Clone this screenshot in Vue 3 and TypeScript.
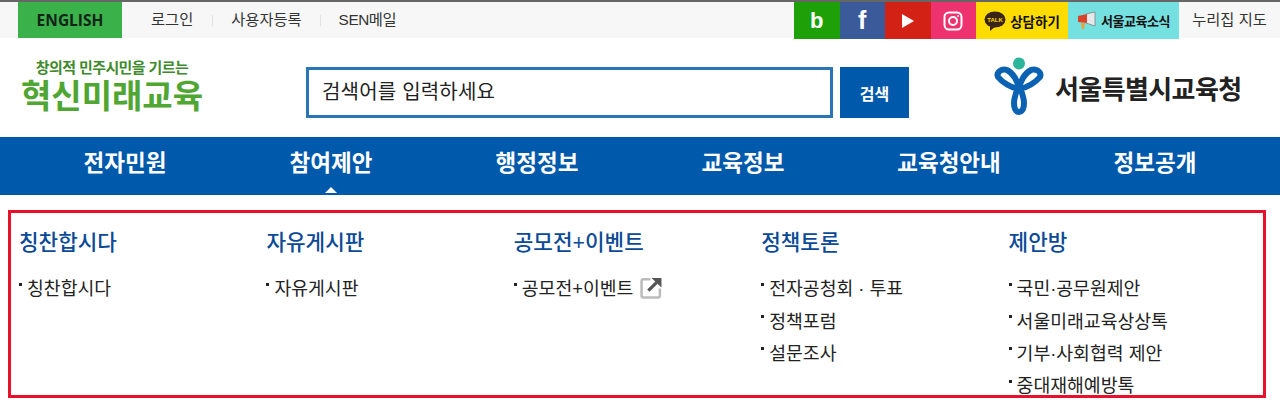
<script setup lang="ts">
const topLinks = ['로그인', '사용자등록', 'SEN메일']
const navItems = ['전자민원', '참여제안', '행정정보', '교육정보', '교육청안내', '정보공개']
const columns = [
  { title: '칭찬합시다', links: [{ label: '칭찬합시다' }] },
  { title: '자유게시판', links: [{ label: '자유게시판' }] },
  { title: '공모전+이벤트', links: [{ label: '공모전+이벤트', external: true }] },
  { title: '정책토론', links: [{ label: '전자공청회 · 투표' }, { label: '정책포럼' }, { label: '설문조사' }] },
  {
    title: '제안방',
    links: [{ label: '국민·공무원제안' }, { label: '서울미래교육상상톡' }, { label: '기부·사회협력 제안' }, { label: '중대재해예방톡' }],
  },
]
</script>

<template>
  <div class="page">
    <div class="topbar">
      <a class="english">ENGLISH</a>
      <ul class="toplinks">
        <li v-for="link in topLinks" :key="link">{{ link }}</li>
      </ul>
      <div class="sns">
        <a class="sq blog">b</a>
        <a class="sq fb">f</a>
        <a class="sq yt">
          <svg width="14" height="14" viewBox="0 0 14 14"><path d="M1 0 L13 7 L1 14 Z" fill="#fff" /></svg>
        </a>
        <a class="sq insta">
          <svg width="20" height="20" viewBox="0 0 20 20" fill="none" stroke="#fff" stroke-width="2">
            <rect x="1.5" y="1.5" width="17" height="17" rx="4.5" />
            <circle cx="10" cy="10" r="4" />
            <circle cx="15" cy="5" r="0.6" fill="#fff" stroke-width="1" />
          </svg>
        </a>
        <a class="talk">
          <svg width="22" height="22" viewBox="0 0 22 22">
            <ellipse cx="11" cy="9.5" rx="10.5" ry="8" fill="#3a2415" />
            <path d="M6 15 L6 21 L12 16 Z" fill="#3a2415" />
            <text x="11" y="12" text-anchor="middle" class="talk-txt">TALK</text>
          </svg>
          <span>상담하기</span>
        </a>
        <a class="news">
          <svg width="20" height="20" viewBox="0 0 20 20">
            <path d="M9 3 L18 1 L18 15 L9 12 Z" fill="#e8e8e8" stroke="#777" stroke-width="0.7" />
            <path d="M1 5 L10 3 L10 12 L1 11 Z" fill="#d9432b" />
            <path d="M4 12 L8 12 L7 18 L5 18 Z" fill="#e8a13a" />
          </svg>
          <span>서울교육소식</span>
        </a>
      </div>
      <a class="nuri">누리집 지도</a>
    </div>

    <header class="header">
      <div class="slogan">
        <span class="slogan-sub">창의적 민주시민을 기르는</span>
        <span class="slogan-main">혁신미래교육</span>
      </div>
      <form class="search" @submit.prevent>
        <div class="search-input">검색어를 입력하세요</div>
        <button class="search-btn" type="button">검색</button>
      </form>
      <div class="office">
        <svg width="50" height="58" viewBox="0 0 50 58">
          <circle cx="25" cy="6.5" r="6" fill="#2cb59a" />
          <g fill="none" stroke="#0b62b3" stroke-width="6" stroke-linejoin="round">
            <path d="M25 32 C17 31 8 25 4 20 C2 15 8 11 13 13 C19 16 24 24 25 32 Z" />
            <path d="M25 32 C33 31 42 25 46 20 C48 15 42 11 37 13 C31 16 26 24 25 32 Z" />
            <path d="M25 30 C20 38 19 47 21 52 C23 56 27 56 29 52 C31 47 30 38 25 30 Z" />
          </g>
        </svg>
        <span>서울특별시교육청</span>
      </div>
    </header>

    <nav class="nav">
      <a v-for="(item, i) in navItems" :key="item" class="nav-item" :class="{ on: i === 1 }">{{ item }}</a>
    </nav>

    <section class="panel">
      <div v-for="col in columns" :key="col.title" class="col">
        <h3>{{ col.title }}</h3>
        <ul>
          <li v-for="link in col.links" :key="link.label">
            {{ link.label }}
            <svg v-if="link.external" class="ext" width="23" height="23" viewBox="0 0 22 22" fill="none">
              <path d="M10 3 H3 A1.5 1.5 0 0 0 1.5 4.5 V19 A1.5 1.5 0 0 0 3 20.5 H17.5 A1.5 1.5 0 0 0 19 19 V12" stroke="#bbb" stroke-width="2.4" />
              <path d="M8 14 L16 6" stroke="#555" stroke-width="3" />
              <path d="M11 2 H20.5 V11 Z" fill="#555" />
            </svg>
          </li>
        </ul>
      </div>
    </section>
  </div>
</template>

<style>
html,
body {
  margin: 0;
  background: #fff;
  overflow: hidden;
}
</style>

<style scoped>
.page {
  width: 1280px;
  height: 412px;
  overflow: hidden;
  font-family: "Liberation Sans", "Noto Sans CJK KR", sans-serif;
  color: #222;
}
ul {
  list-style: none;
  margin: 0;
  padding: 0;
}
.topbar {
  display: flex;
  height: 36px;
  padding-left: 18px;
  background: #f7f7f7;
  border-top: 2px solid #666;
}
.english {
  width: 104px;
  background: #3bb14a;
  color: #14231a;
  font-family: "Open Sans", sans-serif;
  font-size: 15.5px;
  font-weight: 700;
  line-height: 36px;
  text-align: center;
}
.toplinks {
  display: flex;
  flex: 1;
  padding-left: 29px;
  font-size: 15.3px;
  line-height: 36px;
  color: #333;
}
.toplinks li + li {
  margin-left: 19px;
  padding-left: 19px;
  background: linear-gradient(#e2e2e2, #e2e2e2) left 13px / 1px 11px no-repeat;
}
.toplinks li:last-child {
  margin-left: 18px;
  letter-spacing: -0.4px;
}
.sns {
  display: flex;
  height: 37px;
}
.sq {
  display: flex;
  align-items: center;
  justify-content: center;
  width: 45.5px;
  color: #fff;
  font-size: 22px;
  font-weight: 700;
}
.blog {
  background: #1ea108;
}
.fb {
  background: #3b5a9a;
  font-size: 25px;
}
.yt {
  background: #d32116;
}
.insta {
  background: #ee3270;
}
.talk,
.news {
  display: flex;
  align-items: center;
  justify-content: center;
  gap: 4px;
  font-size: 13.5px;
  font-weight: 700;
  color: #111;
}
.talk {
  width: 92px;
  background: #ffdc00;
}
.talk-txt {
  fill: #ffdc00;
  font-size: 6px;
  font-weight: 700;
}
.news {
  width: 111px;
  background: #75e0e0;
  font-size: 13px;
  letter-spacing: -0.5px;
}
.nuri {
  width: 101px;
  font-size: 15.3px;
  line-height: 36px;
  text-align: center;
  color: #333;
}
.header {
  display: flex;
  align-items: center;
  height: 99px;
  background: #fff;
}
.slogan {
  display: flex;
  flex-direction: column;
  align-items: center;
  width: 188px;
  margin: 0 0 3px 18px;
  color: #4fa632;
  font-weight: 700;
  line-height: 1;
}
.slogan-sub {
  font-size: 15px;
  letter-spacing: -0.6px;
  color: #3f8a2c;
}
.slogan-main {
  margin-top: 5px;
  font-size: 33px;
}
.search {
  display: flex;
  gap: 7px;
  margin: 10px 0 0 100px;
}
.search-input {
  box-sizing: border-box;
  width: 527px;
  height: 51px;
  padding-left: 13px;
  border: 3px solid #2a74b8;
  font-size: 20px;
  letter-spacing: 0.2px;
  line-height: 45px;
  color: #222;
  background: #fff;
}
.search-btn {
  width: 69px;
  height: 51px;
  padding: 0;
  border: 0;
  background: #0059aa;
  color: #fff;
  font: 700 16px "Noto Sans CJK KR", sans-serif;
}
.office {
  display: flex;
  align-items: center;
  gap: 11px;
  margin-left: 85px;
  color: #222;
  font-size: 26px;
  font-weight: 700;
  letter-spacing: -0.6px;
  white-space: nowrap;
}
.office svg {
  margin-bottom: 3px;
}
.nav {
  display: flex;
  height: 58px;
  padding: 0 22px;
  background: #0059aa;
}
.nav-item {
  position: relative;
  flex: 1;
  color: #fff;
  font-size: 22.5px;
  font-weight: 700;
  line-height: 54px;
  text-align: center;
}
.nav-item.on::after {
  content: "";
  position: absolute;
  left: 50%;
  bottom: 2px;
  margin-left: -6px;
  border: 6px solid transparent;
  border-top: 0;
  border-bottom: 6px solid #fff;
}
.panel {
  box-sizing: border-box;
  display: flex;
  width: 1258px;
  height: 188px;
  margin: 15px 0 0 8px;
  padding: 15px 0 0 8px;
  border: 3px solid #e8102a;
  overflow: hidden;
}
.col {
  flex: 0 0 247.4px;
}
h3 {
  margin: 0;
  color: #0b4a96;
  font-size: 21.3px;
  font-weight: 500;
  line-height: 30px;
}
.col ul {
  margin-top: 13px;
}
.col li {
  display: flex;
  align-items: center;
  height: 32.4px;
  color: #222;
  font-size: 18.3px;
  white-space: pre;
}
.col li::before {
  content: "";
  width: 3px;
  height: 3px;
  margin: 0 5px 6px 0;
  background: #222;
}
.ext {
  margin-left: 2px;
}
</style>
